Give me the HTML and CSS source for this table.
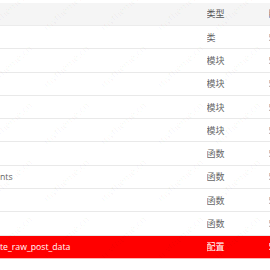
FILE: index.html
```html
<!DOCTYPE html>
<html lang="zh-CN">
<head>
<meta charset="utf-8">
<link rel="stylesheet" href="styles.css">
</head>
<body>
<div class="page">
  <div class="table">
    <div class="row head"><span class="name"></span><span class="type">类型</span><span class="ver">版本</span></div>
    <div class="row"><span class="name"></span><span class="type">类</span><span class="ver">5</span></div>
    <div class="row"><span class="name"></span><span class="type">模块</span><span class="ver">5</span></div>
    <div class="row"><span class="name"></span><span class="type">模块</span><span class="ver">5</span></div>
    <div class="row"><span class="name"></span><span class="type">模块</span><span class="ver">5</span></div>
    <div class="row"><span class="name"></span><span class="type">模块</span><span class="ver">5</span></div>
    <div class="row"><span class="name"></span><span class="type">函数</span><span class="ver">5</span></div>
    <div class="row"><span class="name">nts</span><span class="type">函数</span><span class="ver">5</span></div>
    <div class="row"><span class="name"></span><span class="type">函数</span><span class="ver">5</span></div>
    <div class="row"><span class="name"></span><span class="type">函数</span><span class="ver">5</span></div>
    <div class="row active"><span class="name">te_raw_post_data</span><span class="type">配置</span><span class="ver">5</span></div>
    <div class="row"><span class="name"></span><span class="type"></span><span class="ver"></span></div>
  </div>
  <div class="watermark">
    <span>mytheme.cn</span><span>mytheme.cn</span><span>mytheme.cn</span><span>mytheme.cn</span><span>mytheme.cn</span>
    <span>mytheme.cn</span><span>mytheme.cn</span><span>mytheme.cn</span><span>mytheme.cn</span><span>mytheme.cn</span>
    <span>mytheme.cn</span><span>mytheme.cn</span><span>mytheme.cn</span><span>mytheme.cn</span><span>mytheme.cn</span>
    <span>mytheme.cn</span><span>mytheme.cn</span><span>mytheme.cn</span><span>mytheme.cn</span><span>mytheme.cn</span>
    <span>mytheme.cn</span><span>mytheme.cn</span><span>mytheme.cn</span><span>mytheme.cn</span><span>mytheme.cn</span>
  </div>
</div>
</body>
</html>
```

FILE: styles.css
```css
html, body {
  margin: 0;
  padding: 0;
  background: #fff;
  overflow: hidden;
}
.page {
  position: relative;
  width: 270px;
  height: 270px;
  overflow: hidden;
  font-family: "Noto Sans CJK SC", "Noto Sans", sans-serif;
  font-size: 9px;
  color: #666;
}
.table {
  padding-top: 2.7px;
}
.row {
  display: grid;
  grid-template-columns: 206.5px 62px 40px;
  height: 23.3px;
  box-sizing: border-box;
  border-bottom: 1px solid #e9e9e9;
  align-items: center;
  white-space: nowrap;
}
.row.head {
  background: #f5f5f5;
  color: #555;
  border-bottom-color: #ececec;
}
.row.active {
  background: #ff0000;
  color: #fff;
  border-bottom-color: #ffb3b3;
}
.name {
  font-family: "Open Sans", "Noto Sans", sans-serif;
  font-size: 8.7px;
}
.type, .ver {
  overflow: hidden;
}
.ver {
  color: #999;
}
.row.head .ver {
  color: #666;
}
.row.active .ver {
  color: #fff;
}
.watermark {
  position: absolute;
  left: -20px;
  top: -20px;
  width: 320px;
  height: 320px;
  display: grid;
  grid-template-columns: repeat(5, 57px);
  grid-auto-rows: 57px;
  pointer-events: none;
}
.watermark span {
  display: flex;
  align-items: center;
  justify-content: center;
  font-family: "Open Sans", sans-serif;
  font-size: 10px;
  color: rgba(0, 0, 0, 0.045);
  transform: rotate(-42deg);
}
```
